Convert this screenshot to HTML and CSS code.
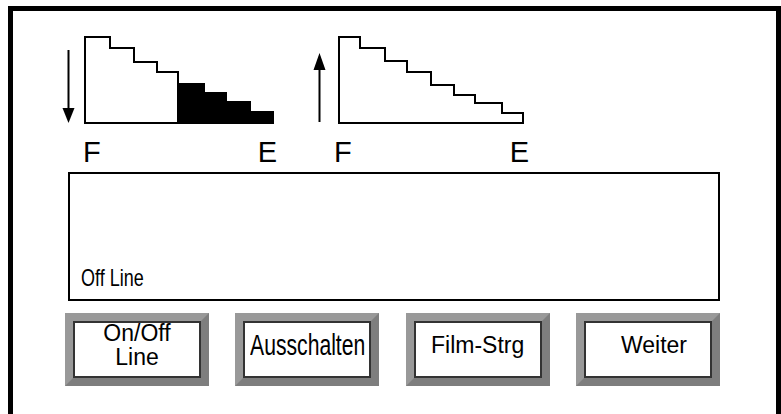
FILE: index.html
```html
<!DOCTYPE html>
<html>
<head>
	<title>Film</title>
	<link rel="stylesheet" href="styles.css">
</head>
<body>
	<div class="screen">
		<div class="gauges">
			<div class="gauge">
				<svg class="chart" width="220" height="92" viewBox="0 0 220 92">
					<line x1="8.5" y1="16" x2="8.5" y2="76" stroke="#000" stroke-width="2"/>
					<polygon points="2.5,74 14.5,74 8.5,89" fill="#000"/>
					<path d="M25,89 V3 H50 V14 H74 V28 H97 V38 H118 V89 Z" fill="#fff" stroke="#000" stroke-width="2"/>
					<path d="M118,89 V50 H144 V59 H166 V68 H190 V78 H213 V89 Z" fill="#000" stroke="#000" stroke-width="2"/>
				</svg>
				<div class="scale scale-fill"><span>F</span><span>E</span></div>
			</div>
			<div class="gauge">
				<svg class="chart" width="220" height="92" viewBox="0 0 220 92">
					<line x1="9.5" y1="34" x2="9.5" y2="88" stroke="#000" stroke-width="2"/>
					<polygon points="3.5,36 15.5,36 9.5,19" fill="#000"/>
					<path d="M29,89 V3 H50 V14 H75 V27 H97 V38 H121 V51 H144 V61 H165 V69 H192 V79 H213 V89 Z" fill="#fff" stroke="#000" stroke-width="2"/>
				</svg>
				<div class="scale scale-empty"><span>F</span><span>E</span></div>
			</div>
		</div>
		<div class="display">
			<span class="status">Off Line</span>
		</div>
		<div class="buttons">
			<div class="btn"><span>On/Off<br>Line</span></div>
			<div class="btn"><span class="squeeze">Ausschalten</span></div>
			<div class="btn"><span>Film-Strg</span></div>
			<div class="btn btn-next"><span>Weiter</span></div>
		</div>
	</div>
</body>
</html>
```

FILE: styles.css
```css
body {
	margin: 0;
	background: #fff;
	color: #000;
	font-family: "Liberation Sans", Arial, sans-serif;
}

.screen {
	margin: 6px 0 0 8px;
	width: 773px;
	height: 420px;
	box-sizing: border-box;
	border: 5px solid #000;
	border-bottom: 0;
}

.gauges {
	display: flex;
	gap: 30px;
	height: 161px;
	box-sizing: border-box;
	padding: 23px 0 0 47px;
}

.gauge {
	display: flex;
	flex-direction: column;
	width: 220px;
}

.chart {display: block;}

.scale {
	display: flex;
	justify-content: space-between;
	margin-top: 12px;
	font-size: 29px;
	line-height: 29px;
}

.scale-fill {padding: 0 3px 0 23px;}
.scale-empty {padding: 0 1px 0 24px;}

.display {
	display: flex;
	align-items: flex-end;
	margin-left: 55px;
	width: 652px;
	height: 129px;
	box-sizing: border-box;
	border: 2px solid #000;
	padding: 0 0 10px 11px;
}

.status {
	display: inline-block;
	font-size: 18px;
	line-height: 18px;
	transform: scaleY(1.3);
	transform-origin: 0 15px;
}

.buttons {
	display: flex;
	justify-content: space-between;
	margin: 12px 0 0 52px;
	width: 655px;
}

.btn {
	display: flex;
	align-items: center;
	justify-content: center;
	width: 144px;
	height: 73px;
	box-sizing: border-box;
	border: 8px solid;
	border-color: #999 #7e7e7e #7e7e7e #999;
	box-shadow: inset 0 0 0 2px #333;
	padding-bottom: 9px;
	font-size: 23px;
	line-height: 24px;
	text-align: center;
}

.btn-next {padding-left: 12px;}

.squeeze {
	display: inline-block;
	transform: scale(0.92, 1.25);
	white-space: nowrap;
}
```
